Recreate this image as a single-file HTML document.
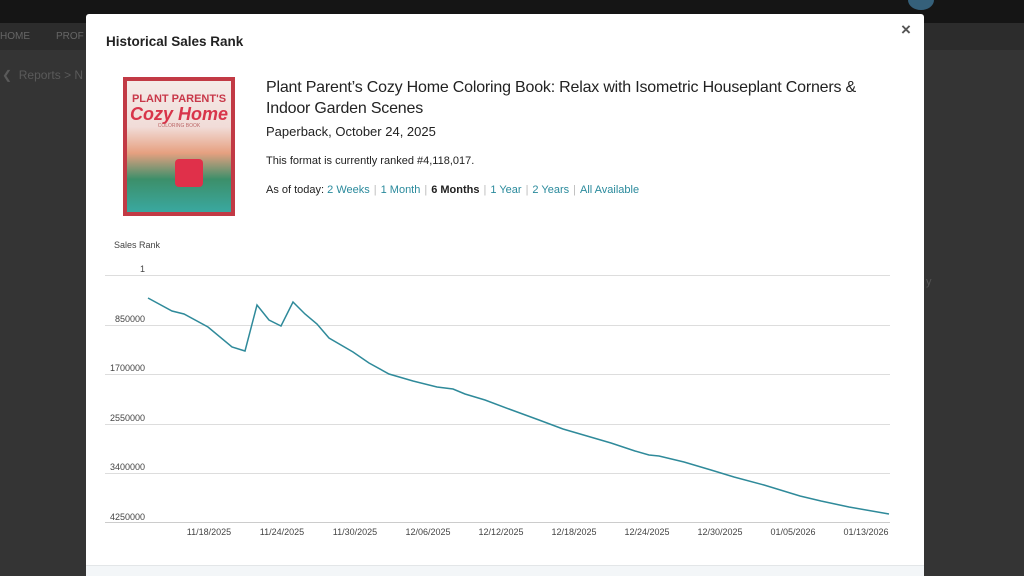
<!DOCTYPE html>
<html><head><meta charset="utf-8"><style>
body{margin:0;width:1024px;height:574px;overflow:hidden;background:#343434;font-family:"Liberation Sans",sans-serif;position:relative}
.top{position:absolute;left:0;top:0;width:1024px;height:23px;background:#151515}
.nav{position:absolute;left:0;top:23px;width:1024px;height:27px;background:#2c2c2c;color:#666;font-size:10px}
.modal{position:absolute;left:86px;top:14px;width:838px;height:560px;background:#fff;border-radius:3px}
.a{position:absolute;white-space:nowrap}
.lnk{color:#2a8a9c}
.sep{color:#bbb;margin:0 4px}
.foot{position:absolute;left:0;top:551px;width:838px;height:10px;background:#f3f6f8;border-top:1px solid #e3e6e8}
</style></head><body>
<div class="top"></div>
<div style="position:absolute;left:908px;top:-10px;width:26px;height:20px;border-radius:50%;background:#35607a"></div>
<div class="nav"><span class="a" style="left:0;top:8px">HOME</span><span class="a" style="left:56px;top:8px">PROF</span></div>
<div class="a" style="left:2px;top:68px;color:#5a5a5a;font-size:12px">❮ &nbsp;Reports &gt; N</div>
<div class="a" style="left:926px;top:276px;color:#555;font-size:11px">y</div>
<div class="modal">
<div class="a" style="left:20px;top:20px;font-size:13.5px;font-weight:bold;color:#222">Historical Sales Rank</div>
<div class="a" style="left:815px;top:6px;font-size:17px;font-weight:bold;color:#555">×</div>
<div class="a" style="left:37px;top:63px;width:112px;height:139px;background:#c23a45">
 <div style="position:absolute;left:4px;top:4px;width:104px;height:131px;background:linear-gradient(#f4ebe8 0%,#f1dcd8 35%,#e6a080 55%,#3c8f6a 75%,#3aa8a0 100%)">
  <div style="text-align:center;color:#c8394a;font-size:11px;font-weight:bold;margin-top:12px">PLANT PARENT'S</div>
  <div style="text-align:center;color:#d8344a;font-size:18px;font-weight:bold;font-style:italic;line-height:18px">Cozy Home</div>
  <div style="text-align:center;color:#b66;font-size:5px">COLORING BOOK</div>
  <div style="position:absolute;left:48px;top:78px;width:28px;height:28px;background:#e0304a;border-radius:4px"></div>
 </div></div>
<div class="a" style="left:180px;top:63px;font-size:16px;letter-spacing:-0.2px;color:#222;line-height:21px">Plant Parent’s Cozy Home Coloring Book: Relax with Isometric Houseplant Corners &amp;<br>Indoor Garden Scenes</div>
<div class="a" style="left:180px;top:110px;font-size:13px;color:#222">Paperback, October 24, 2025</div>
<div class="a" style="left:180px;top:141px;font-size:11px;color:#222">This format is currently ranked #4,118,017.</div>
<div class="a" style="left:180px;top:170px;font-size:11px;color:#222">As of today: <span class="lnk">2 Weeks</span><span class="sep">|</span><span class="lnk">1 Month</span><span class="sep">|</span><b>6 Months</b><span class="sep">|</span><span class="lnk">1 Year</span><span class="sep">|</span><span class="lnk">2 Years</span><span class="sep">|</span><span class="lnk">All Available</span></div>
<svg class="a" style="left:0;top:0" width="838" height="560" viewBox="86 14 838 560">
<g font-family="Liberation Sans,sans-serif" font-size="9" fill="#444">
<text x="114" y="248">Sales Rank</text>
<text x="145" y="272" text-anchor="end">1</text>
<text x="145" y="322" text-anchor="end">850000</text>
<text x="145" y="371" text-anchor="end">1700000</text>
<text x="145" y="421" text-anchor="end">2550000</text>
<text x="145" y="470" text-anchor="end">3400000</text>
<text x="145" y="520" text-anchor="end">4250000</text>
<g text-anchor="middle"><text x="209" y="535">11/18/2025</text><text x="282" y="535">11/24/2025</text><text x="355" y="535">11/30/2025</text><text x="428" y="535">12/06/2025</text><text x="501" y="535">12/12/2025</text><text x="574" y="535">12/18/2025</text><text x="647" y="535">12/24/2025</text><text x="720" y="535">12/30/2025</text><text x="793" y="535">01/05/2026</text><text x="866" y="535">01/13/2026</text></g>
</g>
<g stroke="#ddd" stroke-width="1"><line x1="105" x2="890" y1="275.5" y2="275.5"/><line x1="105" x2="890" y1="325.5" y2="325.5"/><line x1="105" x2="890" y1="374.5" y2="374.5"/><line x1="105" x2="890" y1="424.5" y2="424.5"/><line x1="105" x2="890" y1="473.5" y2="473.5"/><line x1="105" x2="890" y1="522.5" y2="522.5" stroke="#ccc"/></g>
<polyline fill="none" stroke="#2f8a9a" stroke-width="1.5" points="148,298 172,311 184,314 208,327 232,347 245,351 257,305 269,320 281,326 293,302 305,314 317,324 329,338 353,352 369,363 389,374 413,381 437,387 453,389 465,394 485,400 509,409 539,420 563,429 611,443 635,451 649,455 659,456 684,462 711,470 734,477 764,485 800,496 821,501 849,507 889,514"/>
</svg>
<div class="foot"></div>
</div>
</body></html>
